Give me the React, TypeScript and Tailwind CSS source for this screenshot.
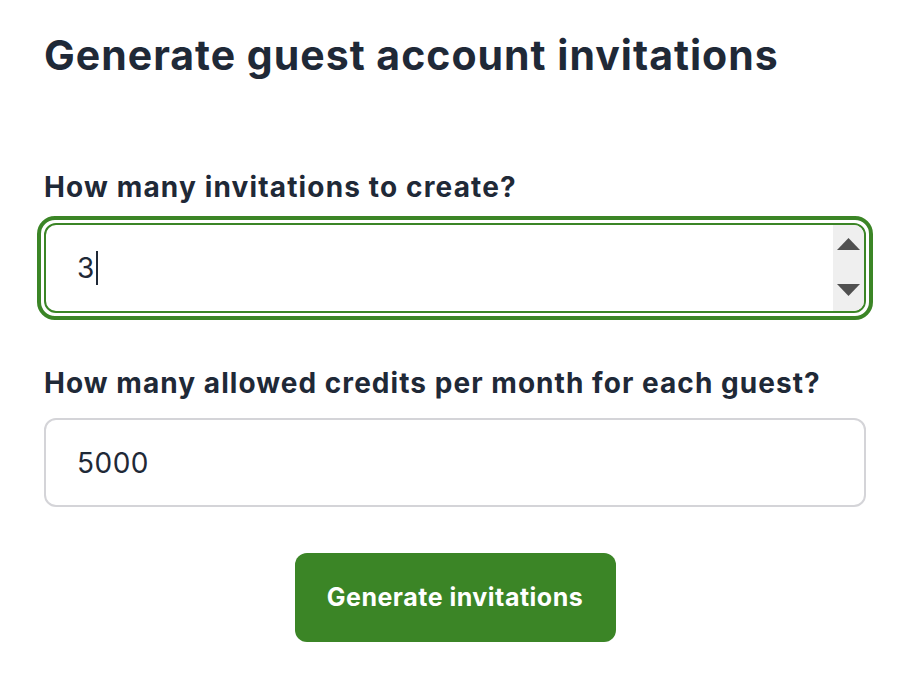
import React from 'react';

const font = { fontFamily: 'Inter, "Noto Sans", sans-serif' };

const App: React.FC = () => {
  return (
    <div className="min-h-screen w-full bg-white text-[#1f2937]" style={font}>
      <div className="px-[44px] pt-[31px] w-[910px]">
        <h1 className="text-[41px] font-bold leading-[48px] tracking-[1px]">Generate guest account invitations</h1>

        <form className="mt-[91px] flex flex-col" onSubmit={(e) => e.preventDefault()}>
          <label className="text-[28px] font-bold leading-[34px] tracking-[1.15px]">How many invitations to create?</label>
          {/* focused number input with native-looking spinner */}
          <div className="mt-[12px] -mx-[7px] rounded-[18px] border-[4px] border-[#3b8526] p-[3px]">
            <div className="flex h-[90px] items-stretch rounded-[12px] border-2 border-[#3b8526] overflow-hidden">
              <div className="flex flex-1 items-center pl-[31px] text-[28px] tracking-[0.5px]">
                <span>3</span>
                <span className="ml-[1px] h-[34px] w-[2px] bg-[#1f2937]" />
              </div>
              <div className="flex w-[31px] flex-col items-center justify-between bg-[#efefef] pt-[13px] pb-[15px]">
                <svg width="23" height="12" viewBox="0 0 23 12"><path d="M11.5 0 L23 12 L0 12 Z" fill="#505050" /></svg>
                <svg width="23" height="12" viewBox="0 0 23 12"><path d="M0 0 L23 0 L11.5 12 Z" fill="#505050" /></svg>
              </div>
            </div>
          </div>

          <label className="mt-[46px] text-[28px] font-bold leading-[34px] tracking-[1.05px]">How many allowed credits per month for each guest?</label>
          <div className="mt-[18px] flex h-[89px] items-center rounded-[12px] border-2 border-[#d4d4d8] pl-[31px] text-[28px] tracking-[0.5px]">
            5000
          </div>

          <div className="mt-[46px] flex justify-center">
            <button
              type="submit"
              className="h-[89px] w-[321px] rounded-[12px] bg-[#3b8526] text-[25px] font-bold tracking-[0.5px] text-white"
            >
              Generate invitations
            </button>
          </div>
        </form>
      </div>
    </div>
  );
};

export default App;
